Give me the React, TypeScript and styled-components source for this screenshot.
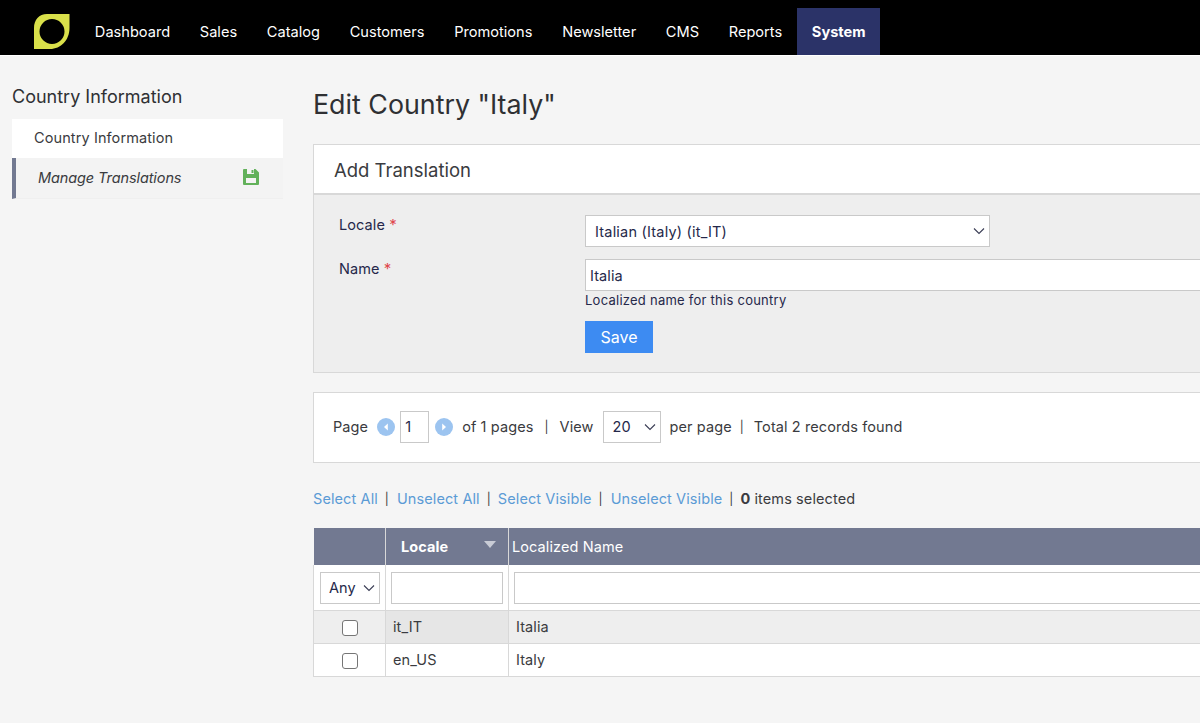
import React from "react";
import styled, { createGlobalStyle } from "styled-components";

const GlobalStyle = createGlobalStyle`
  html, body {
    margin: 0;
    height: 100%;
    overflow: hidden;
    background: #f5f5f5;
  }
  body {
    font-family: Inter, "Liberation Sans", sans-serif;
    font-size: 14.5px;
    letter-spacing: 0.1px;
    color: #2f3033;
  }
  * {
    box-sizing: border-box;
  }
`;

const Header = styled.header`
  height: 56px;
  background: #000;
  border-bottom: 1px solid #fff;
  display: flex;
  align-items: flex-end;
  padding-left: 33px;
`;

const LogoWrap = styled.div`
  width: 37px;
  height: 47px;
  margin-right: 10px;
  display: flex;
  align-items: center;
`;

const NavList = styled.nav`
  display: flex;
  height: 47px;
`;

const NavItem = styled.a<{ $active?: boolean }>`
  display: flex;
  align-items: center;
  padding: 1px 14.85px 0;
  color: #fff;
  font-size: 14.6px;
  letter-spacing: 0;
  font-weight: ${(p) => (p.$active ? 700 : 400)};
  background: ${(p) => (p.$active ? "#2b3368" : "transparent")};
`;

const Layout = styled.div`
  display: flex;
  align-items: flex-start;
  width: 1400px;
`;

const Sidebar = styled.aside`
  width: 271px;
  margin-left: 12px;
  padding-top: 30px;
  flex-shrink: 0;
`;

const SideTitle = styled.h3`
  margin: 0 0 11px;
  font-size: 18px;
  line-height: 22px;
  font-weight: 400;
  letter-spacing: 0;
  color: #2f3033;
`;

const SideItem = styled.a<{ $current?: boolean }>`
  display: flex;
  align-items: center;
  justify-content: space-between;
  height: ${(p) => (p.$current ? "41px" : "39px")};
  color: #3a3b40;
  background: ${(p) => (p.$current ? "#f3f3f3" : "#fff")};
  padding: ${(p) => (p.$current ? "0 24px 2px 22px" : "0 22px 2px")};
  font-style: ${(p) => (p.$current ? "italic" : "normal")};
  letter-spacing: ${(p) => (p.$current ? "-0.1px" : "0.1px")};
  border-left: ${(p) => (p.$current ? "4px solid #727991" : "none")};
  border-bottom: ${(p) => (p.$current ? "1px solid #efefef" : "none")};
`;

const Main = styled.main`
  margin-left: 30px;
  width: 1060px;
`;

const PageTitle = styled.h1`
  margin: 29px 0 21px;
  font-size: 26.8px;
  line-height: 38px;
  font-weight: 400;
  letter-spacing: 0;
  color: #2f3033;
`;

const Panel = styled.section`
  border: 1px solid #d8d8d8;
  background: #fff;
`;

const PanelHeader = styled.div`
  height: 50px;
  padding: 1px 0 0 20px;
  display: flex;
  align-items: center;
  font-size: 18.5px;
  letter-spacing: 0;
  color: #3a3b40;
  border-bottom: 2px solid #d8d8d8;
`;

const PanelBody = styled.div`
  background: #eee;
  padding: 20px 0 19px 25px;
  color: #25284a;
`;

const FormRow = styled.div`
  display: grid;
  grid-template-columns: 246px 1fr;
  margin-bottom: 12px;

  &:last-child {
    margin-bottom: 0;
  }
`;

const Label = styled.label`
  line-height: 18px;
  padding-top: 1px;
`;

const Req = styled.span`
  color: #e0474c;
  font-size: 15px;
`;

const Field = styled.div`
  display: flex;
  flex-direction: column;
  align-items: flex-start;
`;

const SelectBox = styled.div<{ $w: number }>`
  width: ${(p) => p.$w}px;
  height: 32px;
  background: #fff;
  border: 1px solid #c9c9c9;
  display: flex;
  align-items: center;
  justify-content: space-between;
  padding: 0 4px 0 9px;
  color: #25284a;
  flex-shrink: 0;
`;

const LocaleSelect = styled(SelectBox)`
  letter-spacing: 0.2px;
`;

const PagerSelect = styled(SelectBox)`
  margin: 0 9px;
`;

const AnySelect = styled(SelectBox)`
  margin-left: 1px;
  padding-left: 8px;
`;

const TextBox = styled.div<{ $w: string; $pad?: number }>`
  width: ${(p) => p.$w};
  height: 32px;
  background: #fff;
  border: 1px solid #c9c9c9;
  display: flex;
  align-items: center;
  padding: 0 ${(p) => p.$pad ?? 4}px;
  color: #25284a;
  flex-shrink: 0;
`;

const Hint = styled.div`
  font-size: 13px;
  line-height: 18px;
  letter-spacing: 0.25px;
`;

const SaveButton = styled.button`
  margin-top: 12px;
  width: 68px;
  height: 32px;
  border: none;
  background: #3d8bf2;
  color: #fff;
  font-family: inherit;
  font-size: 16px;
  padding: 0;
`;

const PagerPanel = styled(Panel)`
  margin-top: 19px;
  height: 71px;
  display: flex;
  align-items: center;
  padding: 0 0 2px 19px;
  color: #3a3b40;
`;

const Pipe = styled.span<{ $l: number; $r: number }>`
  margin: 0 ${(p) => p.$r}px 0 ${(p) => p.$l}px;
  font-size: 12px;
  color: #3a3b40;
`;

const PageArrow = styled.svg<{ $l: number; $r: number }>`
  width: 18px;
  height: 18px;
  margin: 0 ${(p) => p.$r}px 0 ${(p) => p.$l}px;
  flex-shrink: 0;
`;

const MassBar = styled.div`
  display: flex;
  align-items: center;
  height: 65px;
  padding-top: 5px;
  color: #3a3b40;
`;

const MassLink = styled.a`
  color: #5b9bd5;
`;

const Table = styled.table`
  width: 100%;
  border-collapse: collapse;
  table-layout: fixed;
`;

const HeadCell = styled.th<{ $sorted?: boolean }>`
  height: 37px;
  background: #727991;
  color: #fff;
  border-right: 1px solid #d8d8d8;
  text-align: left;
  font-weight: ${(p) => (p.$sorted ? 700 : 400)};
  padding: 0 3px 0 ${(p) => (p.$sorted ? 15 : 3)}px;
  position: relative;
`;

const SortArrow = styled.span`
  position: absolute;
  right: 12px;
  top: 13px;
  width: 0;
  height: 0;
  border-left: 6px solid transparent;
  border-right: 6px solid transparent;
  border-top: 7px solid #c9ccd6;
`;

const FilterCell = styled.td`
  height: 45px;
  background: #fff;
  border: 1px solid #d8d8d8;
  border-top: none;
  padding: 1px 5px 0;
`;

const BodyCell = styled.td<{ $sorted?: boolean; $odd?: boolean; $center?: boolean }>`
  height: 33px;
  padding: 0 7px;
  border: 1px solid #d8d8d8;
  text-align: ${(p) => (p.$center ? "center" : "left")};
  color: #3a3b40;
  background: ${(p) =>
    !p.$odd ? "#fff" : p.$sorted ? "#e6e6e6" : "#eee"};
`;

const Check = styled.span`
  display: inline-block;
  width: 16px;
  height: 16px;
  border: 1px solid #767676;
  border-radius: 3px;
  background: #fff;
  vertical-align: middle;
`;

const Logo = () => (
  <svg width="37" height="35" viewBox="0 0 37 35">
    <path
      fill="#d9e04a"
      fillRule="evenodd"
      d="M14 0H36.5V14C36.5 26 28 35 17 35H1V14C1 6 6 0 14 0ZM19 5A12.5 12.5 0 1 0 19 30A12.5 12.5 0 1 0 19 5Z"
    />
  </svg>
);

const Chevron = () => (
  <svg width="12" height="8" viewBox="0 0 12 8" fill="none">
    <path d="M1 1.5L6 6.5L11 1.5" stroke="#3a3d55" strokeWidth="1.1" />
  </svg>
);

const SaveIcon = () => (
  <svg width="16" height="16" viewBox="0 0 16 16">
    <path
      fill="#62b15a"
      fillRule="evenodd"
      d="M1 0H12.5L16 3.5V15A1 1 0 0 1 15 16H1A1 1 0 0 1 0 15V1A1 1 0 0 1 1 0ZM4 0V5H11V0ZM3 9V14H13V9Z"
    />
    <path fill="#62b15a" d="M8.5 1H10.5V4H8.5Z" />
  </svg>
);

const Arrow = ({ dir, l, r }: { dir: "prev" | "next"; l: number; r: number }) => (
  <PageArrow viewBox="0 0 18 18" $l={l} $r={r}>
    <circle cx="9" cy="9" r="9" fill="#9cc4f0" />
    <path
      d={dir === "prev" ? "M10.8 5.5L7 9L10.8 12.5Z" : "M7.2 5.5L11 9L7.2 12.5Z"}
      fill="#fff"
    />
  </PageArrow>
);

const navItems = [
  "Dashboard",
  "Sales",
  "Catalog",
  "Customers",
  "Promotions",
  "Newsletter",
  "CMS",
  "Reports",
];

const rows = [
  { locale: "it_IT", name: "Italia" },
  { locale: "en_US", name: "Italy" },
];

export default function App() {
  return (
    <>
      <GlobalStyle />
      <Header>
        <LogoWrap>
          <Logo />
        </LogoWrap>
        <NavList>
          {navItems.map((item) => (
            <NavItem key={item}>{item}</NavItem>
          ))}
          <NavItem $active>System</NavItem>
        </NavList>
      </Header>
      <Layout>
        <Sidebar>
          <SideTitle>Country Information</SideTitle>
          <SideItem>Country Information</SideItem>
          <SideItem $current>
            Manage Translations
            <SaveIcon />
          </SideItem>
        </Sidebar>
        <Main>
          <PageTitle>Edit Country "Italy"</PageTitle>
          <Panel>
            <PanelHeader>Add Translation</PanelHeader>
            <PanelBody>
              <FormRow>
                <Label>
                  Locale <Req>*</Req>
                </Label>
                <Field>
                  <LocaleSelect $w={405}>
                    Italian (Italy) (it_IT)
                    <Chevron />
                  </LocaleSelect>
                </Field>
              </FormRow>
              <FormRow>
                <Label>
                  Name <Req>*</Req>
                </Label>
                <Field>
                  <TextBox $w="100%">Italia</TextBox>
                  <Hint>Localized name for this country</Hint>
                  <SaveButton>Save</SaveButton>
                </Field>
              </FormRow>
            </PanelBody>
          </Panel>
          <PagerPanel>
            Page
            <Arrow dir="prev" l={9} r={5} />
            <TextBox $w="29px">1</TextBox>
            <Arrow dir="next" l={6} r={9} />
            of 1 pages
            <Pipe $l={11} $r={11}>|</Pipe>
            View
            <PagerSelect $w={58}>
              20
              <Chevron />
            </PagerSelect>
            per page
            <Pipe $l={8} $r={10}>|</Pipe>
            Total 2 records found
          </PagerPanel>
          <MassBar>
            <MassLink>Select All</MassLink>
            <Pipe $l={7} $r={8}>|</Pipe>
            <MassLink>Unselect All</MassLink>
            <Pipe $l={7} $r={7}>|</Pipe>
            <MassLink>Select Visible</MassLink>
            <Pipe $l={7} $r={8}>|</Pipe>
            <MassLink>Unselect Visible</MassLink>
            <Pipe $l={7} $r={7}>|</Pipe>
            <strong>0</strong>&nbsp;items selected
          </MassBar>
          <Table>
            <colgroup>
              <col width="72" />
              <col width="123" />
              <col />
            </colgroup>
            <thead>
              <tr>
                <HeadCell />
                <HeadCell $sorted>
                  Locale
                  <SortArrow />
                </HeadCell>
                <HeadCell>Localized Name</HeadCell>
              </tr>
            </thead>
            <tbody>
              <tr>
                <FilterCell>
                  <AnySelect $w={60}>
                    Any
                    <Chevron />
                  </AnySelect>
                </FilterCell>
                <FilterCell>
                  <TextBox $w="100%" />
                </FilterCell>
                <FilterCell>
                  <TextBox $w="100%" />
                </FilterCell>
              </tr>
              {rows.map((row, i) => (
                <tr key={row.locale}>
                  <BodyCell $odd={i === 0} $center>
                    <Check />
                  </BodyCell>
                  <BodyCell $odd={i === 0} $sorted>
                    {row.locale}
                  </BodyCell>
                  <BodyCell $odd={i === 0}>{row.name}</BodyCell>
                </tr>
              ))}
            </tbody>
          </Table>
        </Main>
      </Layout>
    </>
  );
}
